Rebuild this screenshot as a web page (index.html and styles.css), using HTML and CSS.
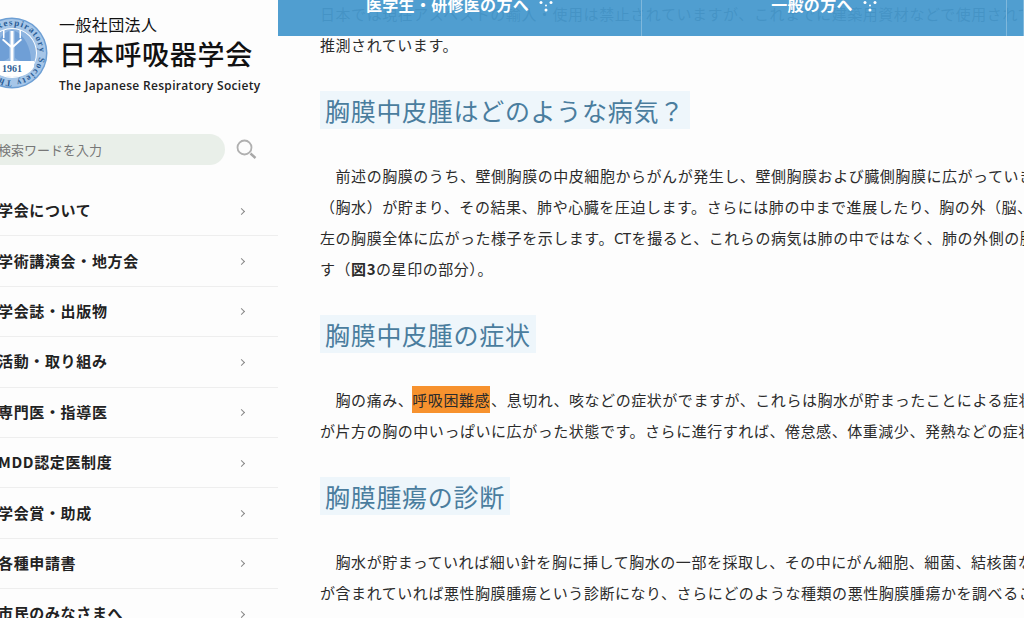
FILE: index.html
```html
<!DOCTYPE html>
<html lang="ja">
<head>
    <meta charset="UTF-8">
    <title>胸膜中皮腫 | 日本呼吸器学会</title>
    <link rel="stylesheet" href="styles.css">
</head>
<body>
    <aside class="sidebar">
        <div class="brand">
            <svg class="logo" width="72" height="72" viewBox="0 0 72 72">
                <defs>
                    <path id="ring" d="M36 63.500a27.500 27.500 0 1 1 .01 0"/>
                </defs>
                <circle cx="36" cy="36" r="35.500" fill="#6d9fd4"/>
                <circle cx="36" cy="36" r="34" fill="#a6c6e8"/>
                <circle cx="36" cy="36" r="25" fill="#fff"/>
                <circle cx="36" cy="36" r="24" fill="#8db4e0"/>
                <path d="M33 14C24 18 17 30 17 44c5 2 11 1 16-3zM39 14c9 4 16 16 16 30-5 2-11 1-16-3z" fill="#6f9fd6"/>
                <path d="M34.500 14h3v30h-3zM36 32l-10-9 1.200-1.600 8.800 7.800 8.800-7.800 1.200 1.600zM27 13h1.500v8H27zM43.500 13H45v8h-1.500z" fill="#fff"/>
                <path d="M14 44h44v6c-4 7-12 10-22 10s-18-3-22-10z" fill="#fff"/>
                <text class="logo-year" x="36" y="55" text-anchor="middle">1961</text>
                <text class="logo-ring"><textPath href="#ring" textLength="168">The Japanese Respiratory Society</textPath></text>
            </svg>
            <div class="brand-text">
                <div class="brand-sub">一般社団法人</div>
                <div class="brand-name">日本呼吸器学会</div>
                <div class="brand-en">The Japanese Respiratory Society</div>
            </div>
        </div>

        <form class="search">
            <input class="search-input" type="text" placeholder="検索ワードを入力">
            <svg class="search-icon" width="22" height="22" viewBox="0 0 22 22">
                <circle cx="8.500" cy="8.500" r="7" fill="none" stroke="#b0b0b0" stroke-width="1.800"/>
                <path d="M14.500 14.500l5 4.500" stroke="#a8a8a8" stroke-width="2.400" fill="none"/>
            </svg>
        </form>

        <nav class="side-nav">
            <a class="side-link" href="#"><span>学会について</span><i class="chevron"></i></a>
            <a class="side-link" href="#"><span>学術講演会・地方会</span><i class="chevron"></i></a>
            <a class="side-link" href="#"><span>学会誌・出版物</span><i class="chevron"></i></a>
            <a class="side-link" href="#"><span>活動・取り組み</span><i class="chevron"></i></a>
            <a class="side-link" href="#"><span>専門医・指導医</span><i class="chevron"></i></a>
            <a class="side-link" href="#"><span>MDD認定医制度</span><i class="chevron"></i></a>
            <a class="side-link" href="#"><span>学会賞・助成</span><i class="chevron"></i></a>
            <a class="side-link" href="#"><span>各種申請書</span><i class="chevron"></i></a>
            <a class="side-link" href="#"><span>市民のみなさまへ</span><i class="chevron"></i></a>
        </nav>
    </aside>

    <main class="content">
        <p>日本では現在アスベストの輸入・使用は禁止されていますが、これまでに建築用資材などで使用されて<br>推測されています。</p>

        <h2>胸膜中皮腫はどのような病気？</h2>
        <p>　前述の胸膜のうち、壁側胸膜の中皮細胞からがんが発生し、壁側胸膜および臓側胸膜に広がっていき<br>（胸水）が貯まり、その結果、肺や心臓を圧迫します。さらには肺の中まで進展したり、胸の外（脳、<br>左の胸膜全体に広がった様子を示します。<span class="abbr">CT</span>を撮ると、これらの病気は肺の中ではなく、肺の外側の胸<br>す（<b>図3</b>の星印の部分）。</p>

        <h2>胸膜中皮腫の症状</h2>
        <p>　胸の痛み、<mark>呼吸困難感</mark>、息切れ、咳などの症状がでますが、これらは胸水が貯まったことによる症状<br>が片方の胸の中いっぱいに広がった状態です。さらに進行すれば、倦怠感、体重減少、発熱などの症状</p>

        <h2>胸膜腫瘍の診断</h2>
        <p>　胸水が貯まっていれば細い針を胸に挿して胸水の一部を採取し、その中にがん細胞、細菌、結核菌な<br>が含まれていれば悪性胸膜腫瘍という診断になり、さらにどのような種類の悪性胸膜腫瘍かを調べるこ</p>
    </main>

    <div class="top-bar">
        <a class="top-link top-link-wide" href="#">医学生・研修医の方へ<svg class="dots" width="14" height="12" viewBox="0 0 14 12"><circle cx="2" cy="2.500" r="1.500"/><circle cx="12" cy="2.500" r="1.500"/><circle cx="7" cy="10" r="1.500"/><circle cx="7" cy="5.500" r="1"/></svg></a>
        <a class="top-link top-link-mid" href="#">一般の方へ<svg class="dots" width="14" height="12" viewBox="0 0 14 12"><circle cx="2" cy="2.500" r="1.500"/><circle cx="12" cy="2.500" r="1.500"/><circle cx="7" cy="10" r="1.500"/><circle cx="7" cy="5.500" r="1"/></svg></a>
        <a class="top-link" href="#"></a>
    </div>
</body>
</html>
```

FILE: styles.css
```css
* {
    margin: 0;
    padding: 0;
    box-sizing: border-box;
}

html, body {
    height: 618px;
    overflow: hidden;
}

body {
    display: flex;
    position: relative;
    background: #fdfdfd;
    font-family: "Noto Sans CJK JP", "Noto Sans", sans-serif;
    color: #333;
}

/* sidebar */
.sidebar {
    width: 278px;
    flex-shrink: 0;
}

.brand {
    display: flex;
    height: 134px;
    padding-top: 14px;
    margin-left: -24px;
}

.logo {
    flex-shrink: 0;
    margin-top: 3px;
}

.logo-year {
    font-family: "Liberation Serif", serif;
    font-size: 10px;
    font-weight: bold;
    fill: #2f5f95;
}

.logo-ring {
    font-family: "Liberation Serif", serif;
    font-size: 9px;
    font-weight: bold;
    fill: #2a5d96;
}

.brand-text {
    margin-left: 11px;
    color: #111;
}

.brand-sub {
    font-size: 16px;
    line-height: 20px;
    letter-spacing: 0.4px;
}

.brand-name {
    margin-top: 3px;
    font-size: 27px;
    font-weight: 500;
    line-height: 34px;
    letter-spacing: 0.7px;
    white-space: nowrap;
}

.brand-en {
    margin-top: 5px;
    font-family: "Open Sans", sans-serif;
    font-size: 12px;
    font-weight: 600;
    line-height: 20px;
    letter-spacing: 0.32px;
    white-space: nowrap;
    color: #222;
}

.search {
    display: flex;
    align-items: center;
    height: 31px;
    margin-left: -30px;
}

.search-input {
    width: 255px;
    height: 31px;
    padding-left: 28px;
    border: none;
    border-radius: 16px;
    background: #e9efe9;
    font-family: inherit;
    font-size: 13px;
}

.search-input::placeholder {
    color: #777;
}

.search-icon {
    margin-left: 11px;
}

.side-nav {
    margin-top: 21px;
}

.side-link {
    display: flex;
    align-items: center;
    justify-content: space-between;
    height: 50.400px;
    padding-right: 34px;
    padding-bottom: 2px;
    border-bottom: 1px solid #eeeeee;
    text-decoration: none;
    color: #222;
    font-size: 15px;
    font-weight: 700;
    white-space: nowrap;
}

.side-link span {
    margin-left: -2px;
    letter-spacing: 0.65px;
}

.chevron {
    width: 5px;
    height: 5px;
    margin-top: 3px;
    border-top: 1px solid #888;
    border-right: 1px solid #888;
    transform: rotate(45deg);
}

/* main text */
.content {
    flex: 1;
    min-width: 0;
    margin-top: -2px;
    padding-left: 42px;
    white-space: nowrap;
    overflow: hidden;
}

.content p {
    font-size: 15px;
    line-height: 31px;
    letter-spacing: 0.55px;
    color: #2b2b2b;
}

.content .abbr {
    letter-spacing: -0.8px;
    margin-right: 1px;
}

.content h2 {
    width: fit-content;
    height: 38px;
    margin: 31px 0 31px;
    padding: 0 5px;
    background: #eef6fb;
    color: #4a7d9e;
    font-size: 25px;
    font-weight: 400;
    line-height: 38px;
    letter-spacing: 0.7px;
}

.content mark {
    margin-left: -1px;
    margin-right: 1px;
    padding: 3px 0;
    background: #f7922e;
    color: #2b2b2b;
}

/* fixed bar on top of the text */
.top-bar {
    position: absolute;
    top: 0;
    left: 278px;
    right: 0;
    height: 36px;
    display: flex;
    background: rgba(71, 153, 206, 0.95);
}

.top-link {
    display: flex;
    justify-content: center;
    flex: 1;
    height: 36px;
    border-right: 1px solid #7fb8dc;
    color: #fff;
    font-size: 16px;
    font-weight: 700;
    line-height: 8px;
    letter-spacing: 0.3px;
    text-decoration: none;
}

.top-link-wide {
    flex: 0 0 364px;
}

.top-link-mid {
    flex: 0 0 365px;
}

.dots {
    margin: 0 0 0 10px;
    fill: #fff;
}
```
